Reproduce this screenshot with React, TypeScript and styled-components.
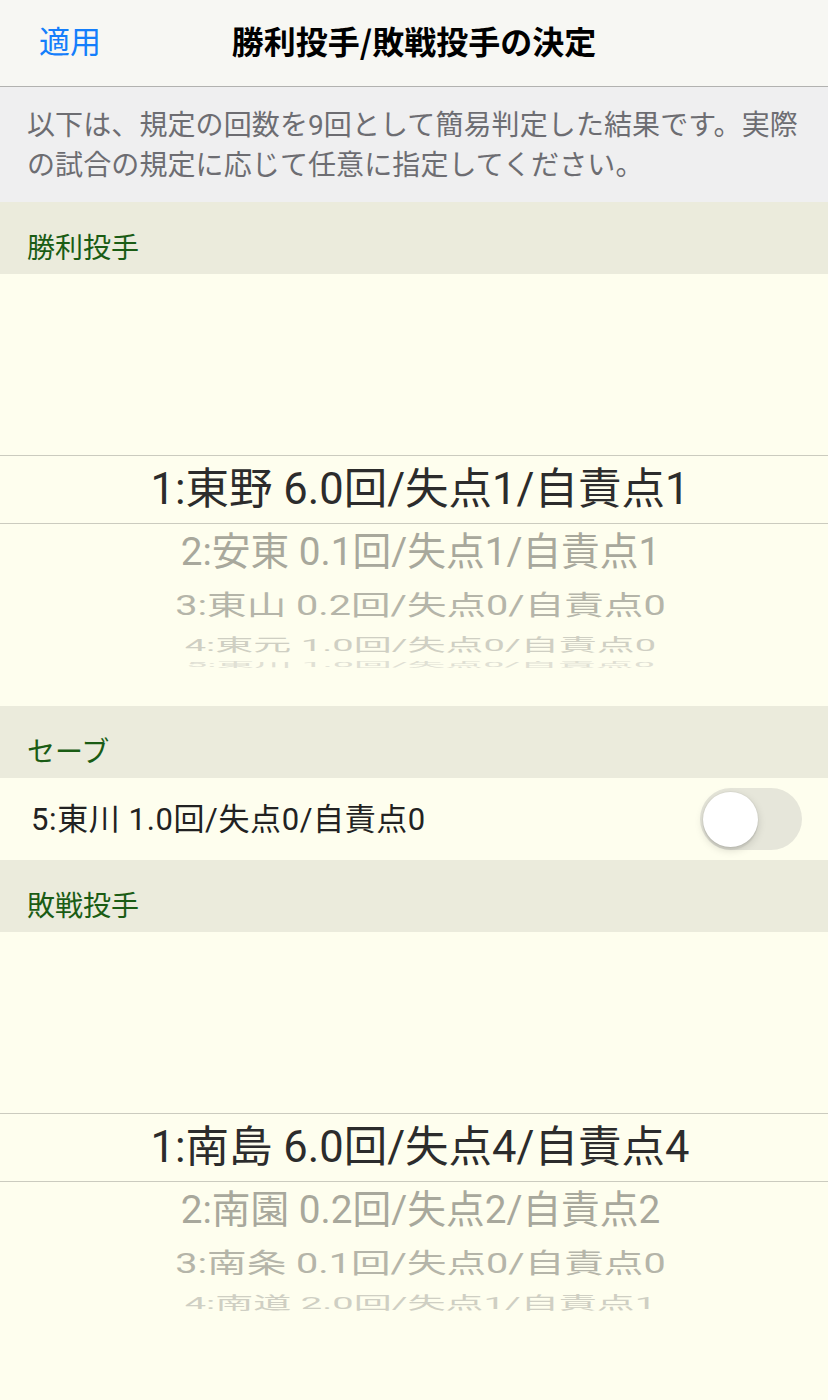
import React from "react";
import styled, { createGlobalStyle } from "styled-components";

const GlobalStyle = createGlobalStyle`
  html, body { margin: 0; padding: 0; background: #fefeee; }
  body {
    font-family: "Roboto", "Noto Sans CJK JP", sans-serif;
    -webkit-font-smoothing: antialiased;
  }
  * { box-sizing: border-box; }
`;

const Screen = styled.div`
  width: 828px;
  min-height: 1400px;
  display: flex;
  flex-direction: column;
  background: #fefeee;
`;

const NavBar = styled.header`
  height: 87px;
  flex: none;
  display: grid;
  grid-template-columns: 1fr auto 1fr;
  align-items: center;
  padding-bottom: 6px;
  background: #f7f7f3;
  border-bottom: 1px solid #b2b2b0;
`;

const NavButton = styled.button`
  justify-self: start;
  padding: 0 0 0 39px;
  margin: 0;
  border: 0;
  background: none;
  font: 400 31px/40px "Noto Sans CJK JP", sans-serif;
  color: #147efb;
`;

const Title = styled.h1`
  margin: 0;
  font: 700 32px/40px "Noto Sans CJK JP", sans-serif;
  color: #000;
  white-space: nowrap;
`;

const Note = styled.div`
  flex: none;
  background: #efeff0;
  padding: 19px 0 16px 27px;
  font: 400 28px/40px "Roboto", "Noto Sans CJK JP", sans-serif;
  letter-spacing: 0.1px;
  color: #6d6d72;
`;

const NoteLine = styled.div`
  white-space: nowrap;
`;

const SectionHeader = styled.div`
  height: 72px;
  flex: none;
  padding: 28px 27px 0;
  background: #ebebdc;
  font: 400 28px/32px "Noto Sans CJK JP", sans-serif;
  color: #1a5c14;
`;

const Picker = styled.div<{ $grow?: boolean }>`
  ${(p) => (p.$grow ? "flex: 1 0 432px;" : "flex: none; height: 432px;")}
  overflow: hidden;
  display: flex;
  flex-direction: column;
  background: #fefeee;
  padding-top: 181px;
`;

const SelectedRow = styled.div`
  height: 69px;
  flex: none;
  border-top: 1px solid #cbcbbf;
  border-bottom: 1px solid #cbcbbf;
  display: flex;
  align-items: center;
  justify-content: center;
  padding-left: 12px;
  font-family: "Roboto", "Noto Sans CJK JP", sans-serif;
  font-size: 43.5px;
  line-height: 1;
  color: #2c2c2c;
  white-space: nowrap;
`;

const WheelRow = styled.div<{ $h: number }>`
  height: ${(p) => p.$h}px;
  flex: none;
  overflow: hidden;
  display: flex;
  align-items: center;
  justify-content: center;
  padding-left: 12px;
`;

const WheelText = styled.span<{ $sx: number; $sy: number; $color: string }>`
  display: inline-block;
  font-family: "Roboto", "Noto Sans CJK JP", sans-serif;
  font-size: 43.5px;
  line-height: 1;
  white-space: nowrap;
  color: ${(p) => p.$color};
  transform: scale(${(p) => p.$sx}, ${(p) => p.$sy});
`;

const SaveRow = styled.div`
  height: 82px;
  flex: none;
  display: flex;
  align-items: center;
  justify-content: space-between;
  padding: 0 26px 0 31px;
  background: #fefeee;
`;

const SaveLabel = styled.span`
  font: 400 31px/1 "Roboto", "Noto Sans CJK JP", sans-serif;
  letter-spacing: 0.6px;
  color: #222;
  white-space: nowrap;
`;

const Switch = styled.div`
  width: 102px;
  height: 62px;
  border-radius: 31px;
  background: #e6e6da;
  display: flex;
  align-items: center;
  padding: 0 4px 0 3px;
`;

const Knob = styled.div`
  width: 55px;
  height: 55px;
  border-radius: 50%;
  background: #fff;
  box-shadow: 0 3px 8px rgba(0, 0, 0, 0.15), 0 3px 1px rgba(0, 0, 0, 0.06),
    0 0 0 1px rgba(0, 0, 0, 0.03);
`;

type Wheel = { h: number; sx: number; sy: number; color: string };

const wheelStyles: Wheel[] = [
  { h: 58, sx: 0.89, sy: 0.88, color: "#a8a89c" },
  { h: 48, sx: 0.91, sy: 0.62, color: "#b5b5a9" },
  { h: 31, sx: 0.875, sy: 0.4, color: "#cfcfc3" },
  { h: 7, sx: 0.87, sy: 0.16, color: "#e0e0d4" },
];

function PickerWheel({ items, grow }: { items: string[]; grow?: boolean }) {
  const [first, ...rest] = items;
  return (
    <Picker $grow={grow}>
      <SelectedRow>{first}</SelectedRow>
      {rest.map((t, i) => {
        const w = wheelStyles[i];
        return (
          <WheelRow key={t} $h={w.h}>
            <WheelText $sx={w.sx} $sy={w.sy} $color={w.color}>
              {t}
            </WheelText>
          </WheelRow>
        );
      })}
    </Picker>
  );
}

export default function App() {
  return (
    <>
      <GlobalStyle />
      <Screen>
        <NavBar>
          <NavButton>適用</NavButton>
          <Title>勝利投手/敗戦投手の決定</Title>
          <span />
        </NavBar>
        <Note>
          <NoteLine>以下は、規定の回数を9回として簡易判定した結果です。実際</NoteLine>
          <NoteLine>の試合の規定に応じて任意に指定してください。</NoteLine>
        </Note>
        <SectionHeader>勝利投手</SectionHeader>
        <PickerWheel
          items={[
            "1:東野 6.0回/失点1/自責点1",
            "2:安東 0.1回/失点1/自責点1",
            "3:東山 0.2回/失点0/自責点0",
            "4:東元 1.0回/失点0/自責点0",
            "5:東川 1.0回/失点0/自責点0",
          ]}
        />
        <SectionHeader>セーブ</SectionHeader>
        <SaveRow>
          <SaveLabel>5:東川 1.0回/失点0/自責点0</SaveLabel>
          <Switch>
            <Knob />
          </Switch>
        </SaveRow>
        <SectionHeader>敗戦投手</SectionHeader>
        <PickerWheel
          grow
          items={[
            "1:南島 6.0回/失点4/自責点4",
            "2:南園 0.2回/失点2/自責点2",
            "3:南条 0.1回/失点0/自責点0",
            "4:南道 2.0回/失点1/自責点1",
          ]}
        />
      </Screen>
    </>
  );
}
